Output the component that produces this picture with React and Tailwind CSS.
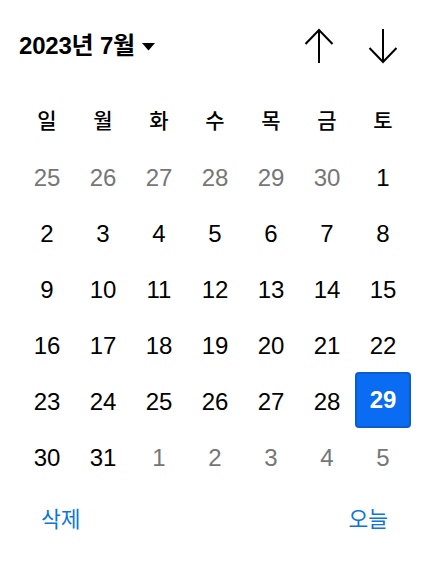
import React from "react";

const weeks = [
  [[25,1],[26,1],[27,1],[28,1],[29,1],[30,1],[1,0]],
  [[2,0],[3,0],[4,0],[5,0],[6,0],[7,0],[8,0]],
  [[9,0],[10,0],[11,0],[12,0],[13,0],[14,0],[15,0]],
  [[16,0],[17,0],[18,0],[19,0],[20,0],[21,0],[22,0]],
  [[23,0],[24,0],[25,0],[26,0],[27,0],[28,0],[29,2]],
  [[30,0],[31,0],[1,1],[2,1],[3,1],[4,1],[5,1]],
];
const days = ["일","월","화","수","목","금","토"];

export default function App() {
  return (
    <div className="w-[432px] h-[564px] bg-white" style={{fontFamily: '"Liberation Sans", Arial, "Noto Sans CJK KR", sans-serif'}}>
      <div className="flex items-center h-[92px] pl-[19px] pr-[34px]">
        <div className="flex items-center text-[24px] font-bold text-black tracking-[-0.2px]">
          <span>2023년 7월</span>
          <svg width="13" height="8" viewBox="0 0 13 8" className="ml-[7px] mt-[1px]"><path d="M0 0 L13 0 L6.5 7.5 Z" fill="#000"/></svg>
        </div>
        <div className="flex-1" />
        <svg width="30" height="36" viewBox="0 0 30 36" className="mr-[34px]">
          <path d="M15 35 V2 M1.5 16 L15 2 L28.5 16" stroke="#000" strokeWidth="2" fill="none"/>
        </svg>
        <svg width="30" height="36" viewBox="0 0 30 36">
          <path d="M15 1 V34 M1.5 20 L15 34 L28.5 20" stroke="#000" strokeWidth="2" fill="none"/>
        </svg>
      </div>
      <div className="ml-[19px] w-[392px] grid grid-cols-7">
        {days.map((d) => (
          <div key={d} className="h-14 flex items-center justify-center text-[21px] font-medium text-black" style={{fontFamily: '"Noto Sans CJK KR", sans-serif'}}>{d}</div>
        ))}
        {weeks.flat().map(([n, t], i) => (
          <div key={i} className="h-14 flex items-center justify-center">
            {t === 2 ? (
              <div className="w-[56px] h-[56px] rounded-[4px] bg-[#0a6cf2] border-2 border-[#0b5ec9] flex items-center justify-center text-white font-bold text-[24px]">{n}</div>
            ) : (
              <span className={"text-[24px] pt-[3px] " + (t === 1 ? "text-[#767676]" : "text-black")}>{n}</span>
            )}
          </div>
        ))}
      </div>
      <div className="flex justify-between pl-[41px] pr-[44px] pt-[18px] text-[21.5px] text-[#0b74de]" style={{fontFamily: '"Noto Sans CJK KR", sans-serif'}}>
        <span>삭제</span>
        <span>오늘</span>
      </div>
    </div>
  );
}
